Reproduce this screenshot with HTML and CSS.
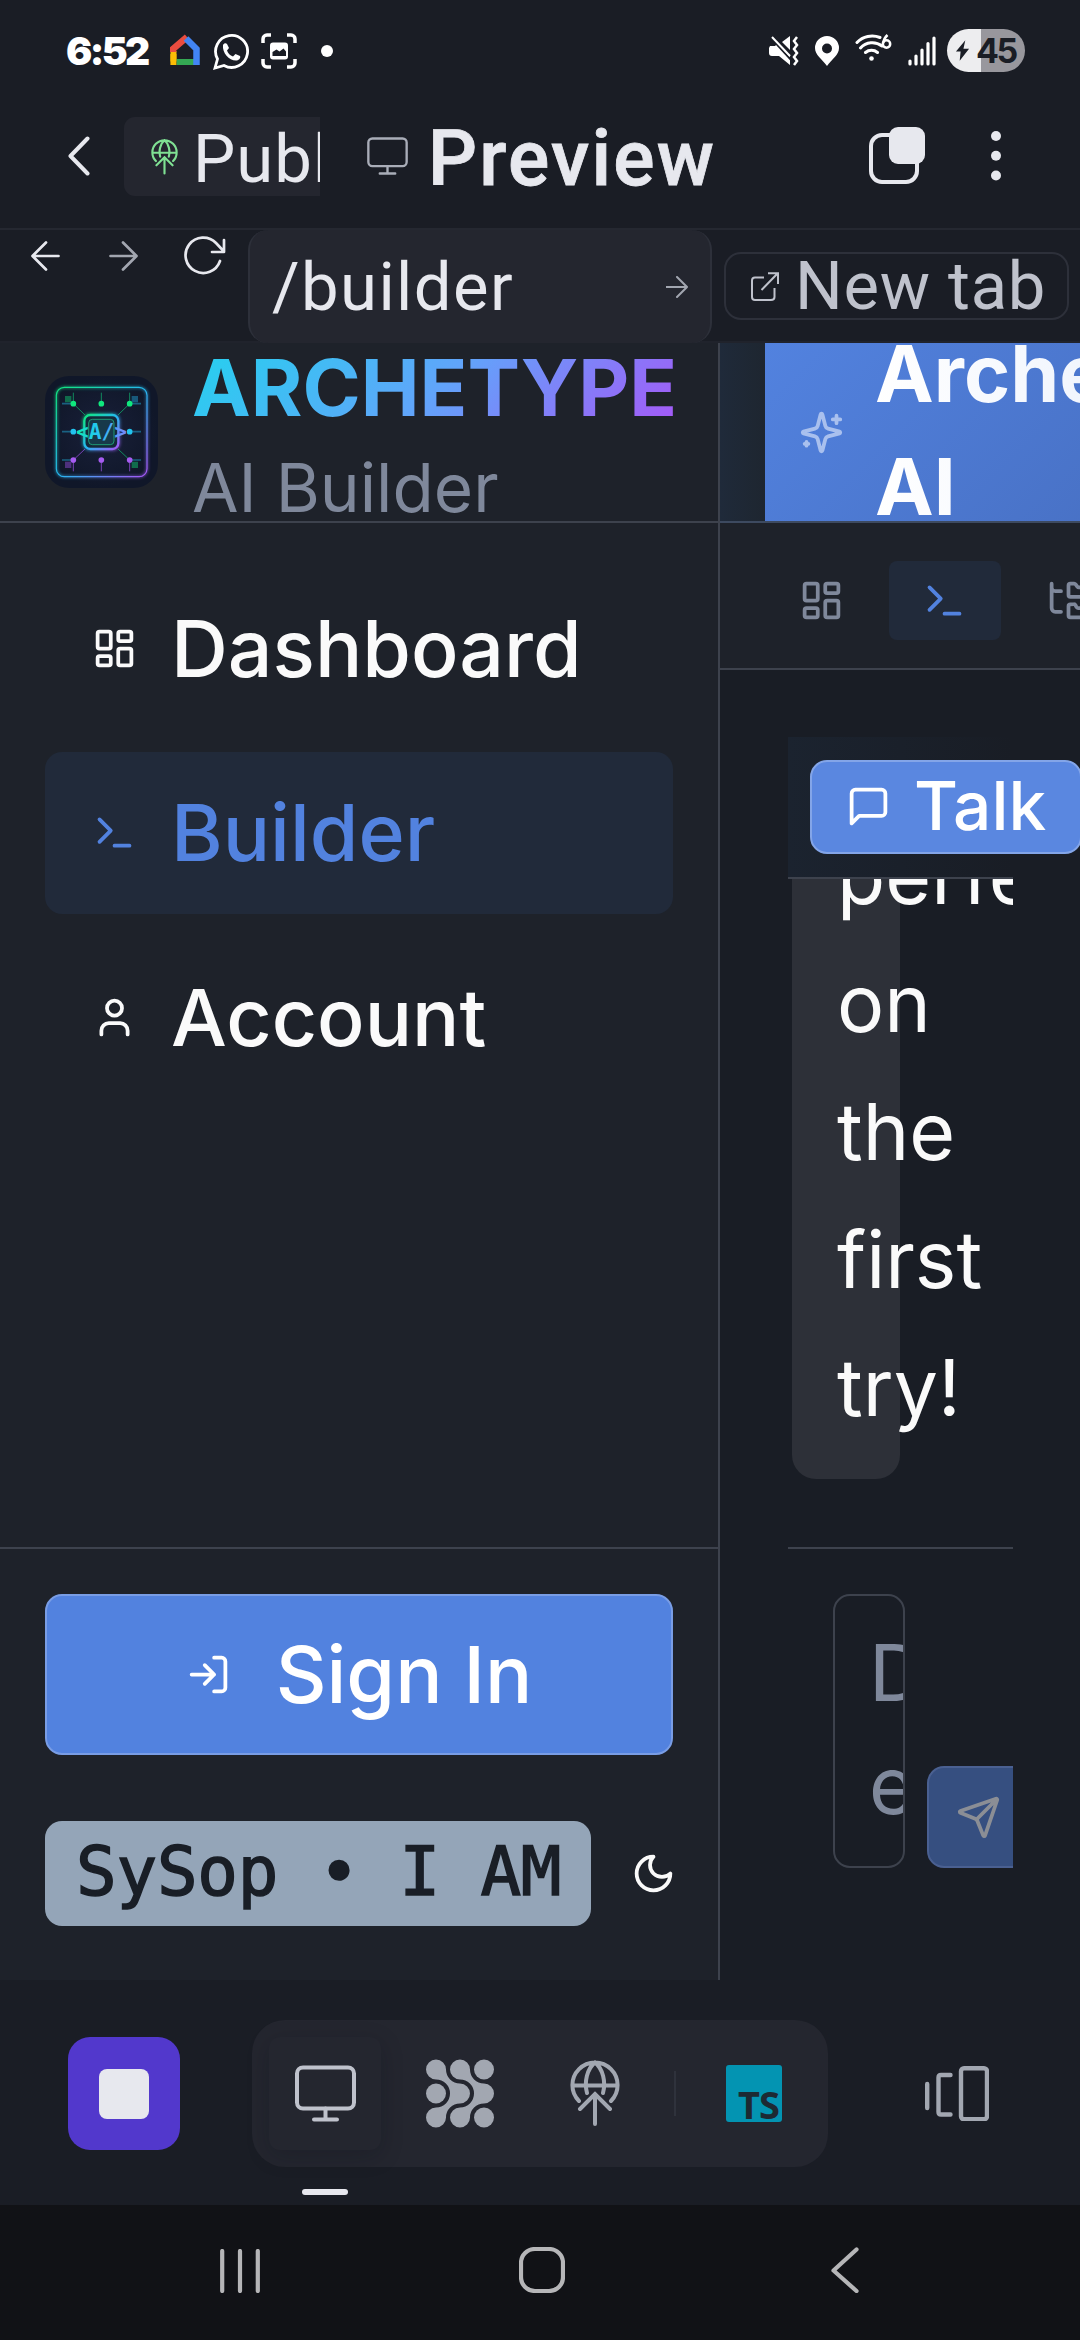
FILE: index.html
```html
<!DOCTYPE html>
<html lang="en">
<head>
<meta charset="utf-8">
<title>Archetype AI Builder</title>
<link rel="stylesheet" href="styles.css">
</head>
<body>
<svg class="defs" aria-hidden="true">
  <symbol id="i-dashboard" viewBox="0 0 24 24"><rect width="7" height="9" x="3" y="3" rx="1"/><rect width="7" height="5" x="14" y="3" rx="1"/><rect width="7" height="9" x="14" y="12" rx="1"/><rect width="7" height="5" x="3" y="16" rx="1"/></symbol>
  <symbol id="i-terminal" viewBox="0 0 24 24"><path d="m4 17 6-6-6-6M12 19h8"/></symbol>
  <symbol id="i-globe" viewBox="0 0 50 67"><path d="M9 41A22.6 22.6 0 1 1 41 41M2.4 25.5H47.6M25 2.4C17 9 14 22 17 33M25 2.4C33 9 36 22 33 33M25 34V64M10 49 25 34 40 49"/></symbol>
</svg>

<header class="status">
  <span class="clock">6:52</span>
  <svg class="s-home" viewBox="0 0 30 31"><path d="M3.500 17V27.500" stroke="#fbbc05" stroke-width="6" fill="none"/><path d="M3 18V15L17 3" stroke="#ea4c3f" stroke-width="6.500" fill="none"/><path d="M6.500 28H24" stroke="#34a853" stroke-width="6" fill="none"/><path d="M16 4.500 26.500 15V31" stroke="#4285f4" stroke-width="6.500" fill="none"/><path d="M3.400 20V31" stroke="#fbbc05" stroke-width="6" fill="none"/></svg>
  <svg class="s-wa" viewBox="0 0 36 37"><path d="M2 35 4.500 26A16 16 0 1 1 11 32.500Z" fill="none" stroke="#fff" stroke-width="2.800"/><path d="M10 12c1-2 3-2.500 4-1l2 4-2 2.500c1 3 3 5 6 6l2.500-2.500 4.500 2c1 2-1 4-3 4.500-7 1-15-7-14-15.500Z" fill="#fff"/></svg>
  <svg class="s-shot" viewBox="0 0 36 36"><path d="M2 10V6a4 4 0 0 1 4-4H10M26 2H30a4 4 0 0 1 4 4V10M34 26V30a4 4 0 0 1-4 4H26M10 34H6a4 4 0 0 1-4-4V26" fill="none" stroke="#fff" stroke-width="3.500"/><rect x="9" y="9.500" width="18" height="17" rx="3" fill="#fff"/><path d="M11.500 23V19l4-2.500 3 2 4-3 2.500 3V23Z" fill="#1a1d25"/></svg>
  <i class="s-dot"></i>
  <svg class="s-mute" viewBox="0 0 30 30"><path d="M1 10H6L9 7 21 20V29L10 20H3Q0 20 0 17V12ZM13 6 21 0V14Z" fill="#fff"/><path d="M2 2 24 26" stroke="#1a1d25" stroke-width="2"/><path d="M3 1 21 20" stroke="#fff" stroke-width="2"/><path d="M28 1 25 5 28 9 25 13 28 17 25 21 28 25 25 29" fill="none" stroke="#fff" stroke-width="2.500"/></svg>
  <svg class="s-pin" viewBox="0 0 24 30"><path d="M12 0A12 12 0 0 0 0 12C0 19 7 23 12 30 17 23 24 19 24 12A12 12 0 0 0 12 0ZM12 7.500A5 5 0 1 1 12 17.500 5 5 0 0 1 12 7.500Z" fill="#fff" fill-rule="evenodd"/></svg>
  <svg class="s-wifi" viewBox="0 0 37 28"><path d="M2 8.500A21 21 0 0 1 25 3.500M5.500 14A16 16 0 0 1 27 12M10.500 18.500A9.500 9.500 0 0 1 22.500 18.500" fill="none" stroke="#fff" stroke-width="3" stroke-linecap="round"/><circle cx="16.500" cy="24.500" r="2.300" fill="#fff"/><circle cx="31.500" cy="10" r="3.700" fill="none" stroke="#fff" stroke-width="2.500"/><path d="M28.200 9Q29 4 32.500 1" fill="none" stroke="#fff" stroke-width="2.500"/></svg>
  <svg class="s-sig" viewBox="0 0 28 30"><path d="M2 25V28M8 20V28M14 14V28M20 7.500V28M26 2V28" stroke="#fff" stroke-width="3.200" stroke-linecap="round"/></svg>
  <div class="battery"><svg viewBox="0 0 16 22"><path d="M11 0 1 12H6L5 22 15 9H9Z"/></svg><span>45</span></div>
</header>

<div class="topbar">
  <svg class="back" viewBox="0 0 22 40"><path d="M19.500 2.500 2.500 20 19.500 37.500"/></svg>
  <div class="publish"><svg class="ico-pub"><use href="#i-globe"/></svg><span>Publish</span></div>
  <svg class="mon-sm" viewBox="0 0 61 56"><rect x="2" y="2" width="57" height="41" rx="6"/><path d="M30.500 43V53M19 54H42"/></svg>
  <h1>Preview</h1>
  <svg class="tabs" viewBox="0 0 56 57"><rect x="2" y="8" width="46" height="47" rx="11" fill="none" stroke="#e7e8ee" stroke-width="4"/><rect x="20" y="0" width="36" height="37" rx="9" fill="#e7e8ee"/></svg>
  <svg class="dots" viewBox="0 0 10 50"><circle cx="5" cy="5" r="5"/><circle cx="5" cy="24.700" r="5"/><circle cx="5" cy="44.500" r="5"/></svg>
</div>

<div class="urlbar">
  <div class="navs">
    <svg class="n1" viewBox="0 0 29 30"><path d="M27.500 15H2M15 1.500 1.500 15 15 28.500"/></svg>
    <svg class="n2" viewBox="0 0 29 30"><path d="M1.500 15H27M14 1.500 27.500 15 14 28.500"/></svg>
    <svg class="n3" viewBox="0 0 42 40"><path d="M36 25A17.700 17.700 0 1 1 32 7L39.500 15M40 4V16H28"/></svg>
  </div>
  <div class="url"><span>/builder</span><svg viewBox="0 0 22 22"><path d="M0 11H21M11 1 21 11 11 21"/></svg></div>
  <div class="newtab"><svg viewBox="0 0 28 29"><path d="M13 5.500H4Q1 5.500 1 8.500V25Q1 28 4 28H20Q23.500 28 23.500 25V16M17 1.200H27V12M26.500 1.500 10.500 18"/></svg><span>New tab</span></div>
</div>

<div class="app">
  <aside class="side">
    <div class="brand">
      <svg class="logo" viewBox="45 48 339 336">
        <defs>
          <linearGradient id="lg" x1="0" y1="0" x2="1" y2="1"><stop offset="0" stop-color="#10e87e"/><stop offset=".5" stop-color="#25b8f0"/><stop offset="1" stop-color="#a855f7"/></linearGradient>
          <radialGradient id="rg"><stop offset="0" stop-color="#19203a"/><stop offset="1" stop-color="#101729"/></radialGradient>
          <linearGradient id="tg" x1="140" x2="285" y1="0" y2="0" gradientUnits="userSpaceOnUse"><stop offset="0" stop-color="#10e8b0"/><stop offset=".4" stop-color="#22c8f2"/><stop offset="1" stop-color="#7388fa"/></linearGradient>
          <filter id="gl" x="-20%" y="-20%" width="140%" height="140%"><feGaussianBlur stdDeviation="5"/></filter>
        </defs>
        <rect x="45" y="48" width="339" height="336" rx="72" fill="url(#rg)"/>
        <rect x="79" y="82" width="272" height="268" rx="24" fill="none" stroke="url(#lg)" stroke-width="7" opacity=".6" filter="url(#gl)"/>
        <rect x="79" y="82" width="272" height="268" rx="24" fill="none" stroke="url(#lg)" stroke-width="3.500"/>
        <g fill-opacity=".4"><path d="M105 108h19v19h-19zM305 305h19v19h-19z" fill="#10e87e"/><path d="M305 108h19v19h-19z" fill="#22b8f2"/><path d="M105 305h19v19h-19z" fill="#a855f7"/></g>
        <path d="M96 131h30M303 131h30M96 215h30M303 215h30M96 300h30M303 300h30" stroke="#22b8e8" stroke-width="5" opacity=".45"/>
        <path d="M130 98v33M214 98v33M299 98v33M130 131l35 34M299 131l-35 34M264 267l35 33" stroke="#10d880" stroke-width="2.500" opacity=".7"/>
        <path d="M130 300v34M214 300v34M299 300v34M130 300l35-33" stroke="#a855f7" stroke-width="2.500" opacity=".8"/>
        <g fill="#10e87e"><circle cx="130" cy="131" r="8.500"/><circle cx="214" cy="131" r="8.500"/><circle cx="299" cy="131" r="8.500"/></g>
        <g fill="#22c3ee"><circle cx="130" cy="215" r="8.500"/><circle cx="299" cy="215" r="8.500"/></g>
        <g fill="#a65cf0"><circle cx="130" cy="300" r="8.500"/><circle cx="214" cy="300" r="8.500"/><circle cx="299" cy="300" r="8.500"/></g>
        <rect x="163" y="165" width="102" height="102" rx="18" fill="none" stroke="url(#lg)" stroke-width="12" opacity=".6" filter="url(#gl)"/>
        <rect x="163" y="165" width="102" height="102" rx="18" fill="#142a3a" stroke="url(#lg)" stroke-width="7"/>
        <rect x="176" y="178" width="76" height="76" rx="11" fill="#17394a" stroke="#22c58a" stroke-width="3" stroke-opacity=".7"/>
        <text x="138" y="236" class="logo-t" textLength="153" lengthAdjust="spacingAndGlyphs" fill="url(#tg)">&lt;A/&gt;</text>
      </svg>
      <div class="brand-t"><strong>ARCHETYPE</strong><span>AI Builder</span></div>
    </div>
    <nav class="menu">
      <a class="item"><svg class="luc"><use href="#i-dashboard"/></svg>Dashboard</a>
      <a class="item on"><svg class="luc"><use href="#i-terminal"/></svg>Builder</a>
      <a class="item"><svg class="luc" viewBox="0 0 24 24"><path d="M19 21v-2a4 4 0 0 0-4-4H9a4 4 0 0 0-4 4v2"/><circle cx="12" cy="7" r="4"/></svg>Account</a>
    </nav>
    <div class="foot">
      <button class="signin"><svg class="luc" viewBox="0 0 24 24"><path d="M15 3h4a2 2 0 0 1 2 2v14a2 2 0 0 1-2 2h-4M10 17l5-5-5-5M15 12H3"/></svg>Sign In</button>
      <div class="sys"><span class="badge">SySop • I AM</span><svg class="luc" viewBox="0 0 24 24"><path d="M12 3a6 6 0 0 0 9 9 9 9 0 1 1-9-9Z"/></svg></div>
    </div>
  </aside>

  <main class="main">
    <div class="hero"><div class="hero-in">
      <svg class="luc" viewBox="0 0 24 24"><path d="M9.937 15.500A2 2 0 0 0 8.500 14.063l-6.135-1.582a.5.5 0 0 1 0-.962L8.500 9.936A2 2 0 0 0 9.937 8.500l1.582-6.135a.5.5 0 0 1 .963 0L14.063 8.500A2 2 0 0 0 15.500 9.937l6.135 1.581a.5.5 0 0 1 0 .964L15.500 14.063a2 2 0 0 0-1.437 1.437l-1.582 6.135a.5.5 0 0 1-.963 0zM20 3v4M22 5h-4M4 17v2M5 18H3"/></svg>
      <h2>Archetype<br>AI</h2>
    </div></div>
    <div class="tools">
      <span class="tool"><svg class="luc"><use href="#i-dashboard"/></svg></span>
      <span class="tool on"><svg class="luc"><use href="#i-terminal"/></svg></span>
      <span class="tool"><svg class="luc" viewBox="0 0 24 24"><path d="M20 10a1 1 0 0 0 1-1V6a1 1 0 0 0-1-1h-2.500a1 1 0 0 1-.8-.4l-.9-1.200A1 1 0 0 0 15 3h-2a1 1 0 0 0-1 1v5a1 1 0 0 0 1 1ZM20 21a1 1 0 0 0 1-1v-3a1 1 0 0 0-1-1h-2.900a1 1 0 0 1-.88-.55l-.42-.85a1 1 0 0 0-.92-.6H13a1 1 0 0 0-1 1v5a1 1 0 0 0 1 1ZM3 5a2 2 0 0 0 2 2h3M3 3v13a2 2 0 0 0 2 2h3"/></svg></span>
    </div>
    <section class="panel">
      <div class="modes"><button class="talk"><svg class="luc" viewBox="0 0 24 24"><path d="M21 15a2 2 0 0 1-2 2H7l-4 4V5a2 2 0 0 1 2-2h14a2 2 0 0 1 2 2z"/></svg>Talk</button></div>
      <div class="chat"><p class="bubble">perfect on the first try!</p></div>
      <div class="compose">
        <div class="area">Describe<br>every</div>
        <button class="send"><svg class="luc" viewBox="0 0 24 24"><path d="M14.536 21.686a.5.5 0 0 0 .937-.024l6.500-19a.496.496 0 0 0-.635-.635l-19 6.500a.5.5 0 0 0-.024.937l7.930 3.180a2 2 0 0 1 1.112 1.110zM21.854 2.147l-10.940 10.939"/></svg></button>
      </div>
    </section>
  </main>
</div>

<footer class="dock">
  <span class="stop"><i></i></span>
  <div class="pill">
    <span class="tile sel"><svg class="mon" viewBox="0 0 61 56"><rect x="2" y="2" width="57" height="41" rx="6"/><path d="M30.500 43V53M19 54H42"/></svg></span>
    <span class="tile"><svg class="grid" viewBox="0 0 68 68"><path id="wv" d="M10 0A10 10 0 0 1 20 10 14 14 0 0 0 34 24 10 10 0 0 1 34 44 14 14 0 0 0 20 58 10 10 0 1 1 10 48 14 14 0 0 0 24 34 14 14 0 0 0 10 20 10 10 0 1 1 10 0Z"/><use href="#wv" x="24"/><circle cx="58" cy="10" r="10"/><circle cx="10" cy="34" r="10"/><circle cx="58" cy="58" r="10"/></svg></span>
    <span class="tile"><svg class="globe"><use href="#i-globe"/></svg></span>
    <i class="sep"></i>
    <span class="tile ts"><b>TS</b></span>
  </div>
  <svg class="device" viewBox="0 0 64 55"><path d="M2.200 18V42M25.500 9H16Q13.500 9 13.500 11.500V46Q13.500 48.500 16 48.500H25.500"/><rect x="36" y="2.200" width="26" height="51" rx="3"/></svg>
</footer>

<div class="sysnav">
  <svg class="rec" viewBox="0 0 40 44"><path d="M2.200 2V42M20 2V42M37.800 2V42"/></svg>
  <svg class="hm" viewBox="0 0 46 46"><rect x="2" y="2" width="42" height="42" rx="14"/></svg>
  <svg class="bk" viewBox="0 0 28 46"><path d="M25.500 2.500 2.500 23.500 25.500 44"/></svg>
</div>
</body>
</html>
```

FILE: styles.css
```css
* { box-sizing: border-box; }
body {
  margin: 0; width: 1080px; height: 2340px; overflow: hidden;
  display: flex; flex-direction: column;
  background: #1a1d25; color: #fafafa;
  font-family: Inter, "Liberation Sans", sans-serif;
}
svg { display: block; flex: none; }
button { font: inherit; color: inherit; margin: 0; padding: 0; }
.defs { position: absolute; width: 0; height: 0; }
.luc { width: 45px; height: 45px; fill: none; stroke: currentColor; stroke-width: 2; stroke-linecap: round; stroke-linejoin: round; }

/* phone status bar */
.status { flex: none; height: 102px; display: flex; align-items: center; padding: 0 55px 0 66px; }
.clock { font: 900 39px/40px Inter, sans-serif; color: #fff; width: 104px; letter-spacing: -2.600px; }
.s-home { width: 30px; height: 31px; margin: -3px 13px 0 0; }
.s-wa { width: 36px; height: 37px; margin-right: 12px; }
.s-shot { width: 36px; height: 36px; margin-right: 24px; }
.s-dot { width: 12px; height: 12px; border-radius: 50%; background: #fff; }
.s-mute { width: 30px; height: 30px; margin-left: auto; }
.s-pin { width: 24px; height: 30px; margin-left: 16px; }
.s-wifi { width: 37px; height: 28px; margin: -6px 0 0 16px; }
.s-sig { width: 28px; height: 30px; margin: 0 11px 0 16px; }
.battery { width: 78px; height: 43px; margin-top: -2px; border-radius: 22px; background: linear-gradient(90deg, #ededef 34px, #98979d 34px); display: flex; align-items: center; padding-left: 8px; color: #1a1d25; font: 700 34px/43px Inter, sans-serif; letter-spacing: -2.500px; }
.battery svg { width: 15px; height: 21px; margin-right: 6px; fill: #1a1d25; }

/* app top bar */
.topbar { flex: none; height: 128px; display: flex; align-items: center; padding: 0 79px 19px 68px; border-bottom: 2px solid #252831; font-family: Roboto, sans-serif; color: #e7e8ee; }
.back { width: 22px; height: 40px; fill: none; stroke: #e7e8ee; stroke-width: 4; stroke-linecap: round; stroke-linejoin: round; }
.publish { width: 196px; height: 79px; margin: 2px 0 0 34px; border-radius: 11px 0 0 11px; background: #24262f; overflow: hidden; display: flex; align-items: center; padding-left: 27px; gap: 15px; font-size: 67px; line-height: 79px; letter-spacing: 1px; }
.publish span { padding-top: 5px; }
.ico-pub { width: 27px; height: 36px; fill: none; stroke: #7fe093; stroke-width: 4; stroke-linecap: round; }
.mon-sm { width: 41px; height: 38px; margin-left: 47px; fill: none; stroke: #a9adb8; stroke-width: 3.500; stroke-linecap: round; }
.topbar h1 { margin: 6px 0 0 20px; font-size: 77px; line-height: 84px; font-weight: 500; -webkit-text-stroke: .8px #e7e8ee; letter-spacing: 2.200px; width: 290px; }
.tabs { width: 56px; height: 57px; margin-left: auto; margin-right: 66px; }
.dots { width: 10px; height: 50px; fill: #e7e8ee; }

/* preview address row */
.urlbar { flex: none; height: 113px; display: flex; border-bottom: 2px solid #20232c; font-family: Roboto, sans-serif; font-size: 67px; }
.navs { width: 248px; display: flex; padding-left: 31px; fill: none; stroke: #e7e8ee; stroke-width: 2.700; stroke-linecap: round; stroke-linejoin: round; }
.navs svg { width: 29px; height: 30px; margin-top: 11px; }
.navs .n2 { margin-left: 49px; stroke: #a2a6b0; }
.navs .n3 { width: 42px; height: 40px; margin: 6px 0 0 46px; }
.url { width: 464px; height: 113px; border: 2px solid #2d303a; border-width: 0 2px; border-radius: 20px; background: #24262f; color: #e7e8ee; display: flex; align-items: center; justify-content: space-between; padding: 0 22px; letter-spacing: 1.400px; }
.url svg { width: 22px; height: 22px; fill: none; stroke: #a2a6b0; stroke-width: 2; stroke-linecap: round; }
.newtab { margin: 22px 0 0 12px; width: 345px; height: 68px; border: 2px solid #2d303a; border-radius: 17px; display: flex; align-items: center; padding-left: 25px; gap: 16px; color: #bfc2cc; white-space: nowrap; letter-spacing: .7px; }
.newtab svg { width: 28px; height: 29px; fill: none; stroke: #bfc2cc; stroke-width: 2; }

/* previewed application */
.app { height: 1637px; flex: none; display: flex; overflow: hidden; }
.side { width: 720px; flex: none; background: #1e222a; border-right: 2px solid #3d424d; display: flex; flex-direction: column; }
.brand { height: 180px; border-bottom: 2px solid #3d424d; display: flex; align-items: center; padding-left: 45px; gap: 34px; flex: none; overflow: hidden; }
.logo { width: 113px; height: 112px; }
.logo-t { font: 700 65px "DejaVu Sans Mono", monospace; }
.brand-t { display: flex; flex-direction: column; padding-top: 1px; }
.brand-t strong { font-size: 78.75px; line-height: 98px; font-weight: 700; letter-spacing: 0; background: linear-gradient(135deg, #22d3ee, #60a5fa 50%, #a855f7); -webkit-background-clip: text; background-clip: text; color: transparent; }
.brand-t span { font-size: 67.500px; line-height: 90px; margin-top: 6px; margin-bottom: -6px; color: #7f889b; }
.menu { flex: 1; padding: 44px 45px; display: flex; flex-direction: column; gap: 22.500px; }
.item { height: 162px; flex: none; display: flex; align-items: center; padding-left: 47px; gap: 34px; border-radius: 17px; font-size: 78.75px; font-weight: 500; }
.item.on { background: #212a3a; color: #5282df; }
.foot { height: 433px; flex: none; border-top: 2px solid #3d424d; padding: 45px; }
.signin { width: 628px; height: 161px; background: #5282df; border: 2px solid #799de5; border-radius: 17px; display: flex; align-items: center; justify-content: center; gap: 45px; font-size: 78.75px; font-weight: 500; color: #fff; padding-bottom: 1px; }
.sys { margin-top: 66px; display: flex; align-items: center; gap: 40px; }
.badge { width: 546px; height: 105px; flex: none; border-radius: 17px; background: #94a5b8; color: #191e26; padding-left: 31px; font: 400 67.500px/102px "DejaVu Sans Mono", monospace; letter-spacing: -.2px; white-space: nowrap; -webkit-text-stroke: 1.500px #191e26; }

.main { width: 450px; flex: none; background: #191d25; display: flex; flex-direction: column; }
.hero { height: 180px; flex: none; padding-left: 45px; border-bottom: 2px solid #3d4a60; background: linear-gradient(90deg, #1f2a3a, #1e2630 45px); }
.hero-in { height: 178px; background: linear-gradient(135deg, #5282df, #476fc2); display: flex; align-items: center; padding-left: 34px; gap: 31px; overflow: hidden; color: #a9c0ee; }
.hero h2 { margin: 0; padding-bottom: 3px; font-size: 78.75px; line-height: 112.500px; font-weight: 700; background: linear-gradient(90deg, #fff, #e4ecfb); -webkit-background-clip: text; background-clip: text; color: transparent; }
.tools { height: 147px; flex: none; background: #1e222a; border-bottom: 2px solid #3d424d; padding: 38px 0 0 45px; display: flex; gap: 11.500px; color: #7f889b; }
.tool { width: 112px; height: 79px; flex: none; border-radius: 8px; display: flex; align-items: center; justify-content: center; }
.tool.on { background: #212a3a; color: #5282df; }
.panel { width: 293px; margin: 67px 0 0 68px; flex: 1; display: flex; flex-direction: column; min-height: 0; }
.modes { width: 225px; height: 142px; flex: none; border-bottom: 2px solid #3d424d; background: linear-gradient(90deg, #1b232f, #191d25); padding: 23px 0 0 22px; }
.talk { width: 272px; height: 94px; background: #5a87e0; border: 2px solid #83a5e8; border-radius: 17px; display: flex; align-items: center; padding-left: 34px; gap: 23px; font-size: 67.500px; line-height: 88px; font-weight: 500; color: #fff; padding-bottom: 2px; }
.chat { width: 225px; height: 668px; flex: none; overflow: hidden; display: flex; flex-direction: column; justify-content: flex-end; padding: 0 0 68px 4px; }
.bubble { width: 108px; margin: 0; flex: none; border-radius: 24px; background: #2d3038; padding: 34px 45px 27px; font-size: 78.75px; line-height: 128px; }
.compose { width: 225px; height: 433px; flex: none; border-top: 2px solid #3d424d; padding: 45px 0 0 45px; display: flex; align-items: flex-start; gap: 22px; overflow: hidden; }
.area { width: 72px; height: 274px; flex: none; border: 2px solid #3d424d; border-radius: 17px; overflow: hidden; padding: 21px 0 0 34px; font-size: 78.75px; line-height: 112.500px; color: #7f889b; }
.send { width: 112px; height: 102px; flex: none; margin-top: 172px; background: #364f80; border: 2px solid #4a6091; border-radius: 17px; padding-left: 27px; color: #8b8e95; }

/* bottom dock */
.dock { height: 225px; flex: none; display: flex; align-items: flex-start; padding: 40px 0 0 68px; }
.stop { width: 112px; height: 113px; margin-top: 17px; border-radius: 22px; background: #5238cc; display: flex; align-items: center; justify-content: center; }
.stop i { width: 50px; height: 50px; border-radius: 8px; background: #e7e8ee; }
.pill { width: 576px; height: 147px; margin-left: 72px; border-radius: 33px; background: #24262f; display: flex; align-items: center; padding-left: 17px; }
.tile { width: 112px; height: 113px; margin-right: 23px; display: flex; align-items: center; justify-content: center; fill: none; stroke: #bfc2cc; stroke-width: 4; stroke-linecap: round; }
.tile.sel { position: relative; border-radius: 11px; background: #24262f; box-shadow: 0 6px 22px rgba(10, 12, 22, .22); }
.tile.sel::after { content: ""; position: absolute; left: 33px; top: 152px; width: 46px; height: 6px; border-radius: 3px; background: #e7e8ee; }
.mon { width: 61px; height: 57px; }
.grid { width: 68px; height: 69px; fill: #a2a7b1; stroke: none; }
.globe { width: 50px; height: 67px; stroke: #a2a7b1; }
.sep { width: 2px; height: 45px; margin-right: 22px; background: #2f323c; }
.tile.ts { margin: 0; }
.ts b { width: 56px; height: 57px; border-radius: 3px; background: #0394b2; color: #1d2a33; font: 700 38px/38px "Noto Sans", sans-serif; letter-spacing: -1px; padding: 20px 0 0 12px; }
.device { width: 64px; height: 55px; margin: 46px 0 0 97px; fill: none; stroke: #a2a7b1; stroke-width: 4.400; stroke-linecap: round; }

.sysnav { height: 135px; flex: none; background: #111216; display: flex; padding: 42px 0 0 220px; fill: none; stroke: #b6b6b8; stroke-width: 4.200; stroke-linecap: round; stroke-linejoin: round; }
.rec { width: 40px; height: 44px; margin-top: 2px; }
.hm { width: 46px; height: 46px; margin-left: 259px; }
.bk { width: 28px; height: 46px; margin-left: 266px; }
```
